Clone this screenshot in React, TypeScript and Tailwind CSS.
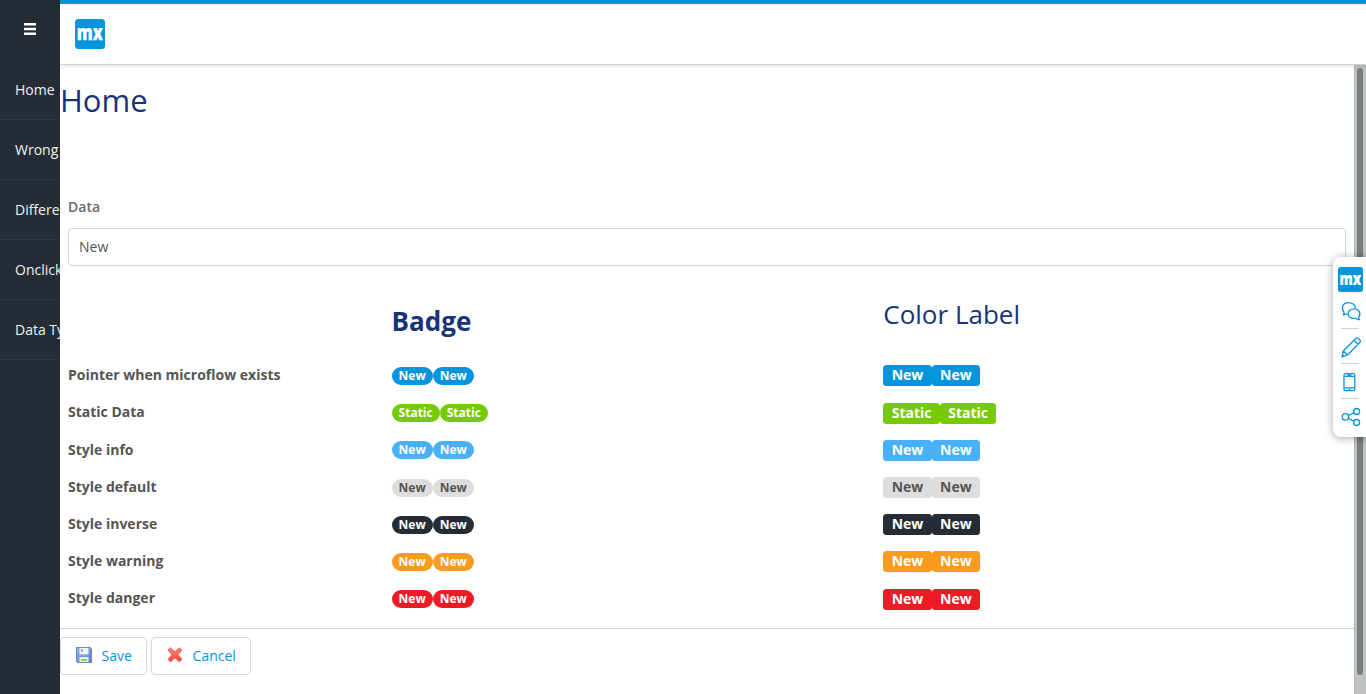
import React from "react";

const menu = ["Home", "Wrong data", "Different views", "Onclick", "Data Types"];

const rows = [
  { title: "Pointer when microflow exists", text: "New", color: "bg-[#0595db] text-white" },
  { title: "Static Data", text: "Static", color: "bg-[#76ca02] text-white" },
  { title: "Style info", text: "New", color: "bg-[#48b0f7] text-white" },
  { title: "Style default", text: "New", color: "bg-[#dddddd] text-[#555555]" },
  { title: "Style inverse", text: "New", color: "bg-[#252c36] text-white" },
  { title: "Style warning", text: "New", color: "bg-[#f99b1d] text-white" },
  { title: "Style danger", text: "New", color: "bg-[#ed1c24] text-white" },
];

function Logo({ className }: { className: string }) {
  return (
    <svg viewBox="0 0 30 30" className={className}>
      <rect width="30" height="30" rx="3.5" fill="#0595db" />
      <text
        x="1.8"
        y="21.2"
        textLength="26"
        lengthAdjust="spacingAndGlyphs"
        fill="#fff"
        stroke="#fff"
        strokeWidth=".25"
        fontFamily="Open Sans, sans-serif"
        fontWeight="800"
        fontSize="21"
      >
        mx
      </text>
    </svg>
  );
}

function SaveIcon() {
  return (
    <svg viewBox="0 0 16 16" className="mb-px size-4">
      <defs>
        <linearGradient id="disk" x1="0" y1="0" x2="1" y2="1">
          <stop offset="0" stopColor="#8fb0e6" />
          <stop offset="1" stopColor="#5b80c6" />
        </linearGradient>
      </defs>
      <path d="M.5.5h14l1 1v14h-14l-1-1z" fill="url(#disk)" stroke="#6a88c0" />
      <path d="M3.5 1h9v6.5h-9z" fill="#eef3fc" />
      <path d="M5 2h1.5v3H5z" fill="#7f9bd0" />
      <path d="M4 8h8" stroke="#9ab5e5" />
      <path d="M3.5 10h9v5h-9z" fill="#e9f2e8" />
      <path d="M5 12h6v2H5z" fill="#8fcb70" />
    </svg>
  );
}

function CancelIcon() {
  return (
    <svg viewBox="0 0 16 16" className="mb-px size-4">
      <defs>
        <linearGradient id="cross" x1="0" y1="0" x2="0" y2="1">
          <stop offset="0" stopColor="#ff8178" />
          <stop offset="1" stopColor="#ef4140" />
        </linearGradient>
      </defs>
      <path
        d="M3.4.8 8 4.9 12.5.8l2.3 2.3L11 7.8l4 4.5-2.6 2.6L8 10.8l-4.5 4.1L1 12.3l4-4.5L1 3.1z"
        fill="url(#cross)"
        stroke="#f9625c"
        strokeWidth="1"
        strokeLinejoin="round"
      />
    </svg>
  );
}

function Tool({ children, last }: { children: React.ReactNode; last?: boolean }) {
  return (
    <div className="h-[35px] w-5">
      <div className={last ? "h-[35px]" : "h-[35px] w-[18px] border-b border-[#cfcfcf]"}>
        <svg
          viewBox="0 0 20 34"
          className="h-[34px] w-5 max-w-none overflow-visible"
          fill="none"
          stroke="#0595db"
          strokeWidth="1.3"
          strokeLinejoin="round"
        >
          {children}
        </svg>
      </div>
    </div>
  );
}

export default function App() {
  return (
    <div className="relative flex h-[694px] w-[1366px] overflow-hidden bg-white font-['Open_Sans',sans-serif] text-sm text-[#555]">
      <aside className="w-[60px] shrink-0 overflow-hidden bg-[#252c36] text-[#f0f1f2]">
        <div className="h-[60px] pt-[23px] pl-6">
          <svg viewBox="0 0 12 12" className="size-3" fill="#fff">
            <path d="M0 0h12v2.4H0zM0 4.8h12v2.4H0zM0 9.6h12V12H0z" />
          </svg>
        </div>
        {menu.map((item) => (
          <div
            key={item}
            className="flex h-[60px] items-center border-b border-[#2f3745] pl-[15px] whitespace-nowrap"
          >
            {item}
          </div>
        ))}
      </aside>

      <div className="flex min-w-0 flex-1 flex-col">
        <header className="z-10 h-[65px] shrink-0 border-t-4 border-b border-t-[#0595db] border-b-[#d0d0d0] bg-white pt-[15px] pl-[15px] shadow-[0_2px_4px_rgba(0,0,0,0.09)]">
          <Logo className="size-[30px]" />
        </header>

        <div className="flex min-h-0 flex-1">
          <main className="min-w-0 flex-1">
            <h1 className="h-[131px] pt-[14px] text-[31px] leading-[42px] text-[#17347b]">Home</h1>
            <div className="px-2">
              <div className="h-8 leading-[22px] font-semibold text-[#6c6c6c]">Data</div>
              <div className="flex h-[38px] items-center rounded border border-[#d2d2d2] px-2.5">New</div>
            </div>
            <div className="grid h-[90.6px] grid-cols-[323.6px_491.7px_1fr] pl-2 text-[26px] leading-9 text-[#17347b]">
              <span />
              <h2 className="pt-[37px] font-bold">Badge</h2>
              <h2 className="pt-[30px]">Color Label</h2>
            </div>
            <div className="h-[271.4px] font-bold">
              {rows.map((row) => (
                <div
                  key={row.title}
                  className="grid h-[37.2px] grid-cols-[323.6px_491.7px_1fr] items-center pl-2"
                >
                  <span>{row.title}</span>
                  <span className="flex pt-[1.8px] text-xs leading-[18px]">
                    {[0, 1].map((n) => (
                      <span key={n} className={`rounded-full px-[7px] ${row.color}`}>
                        {row.text}
                      </span>
                    ))}
                  </span>
                  <span className="flex pt-[1.5px] leading-[19.2px]">
                    {[0, 1].map((n) => (
                      <span key={n} className={`h-[21px] rounded-[3.5px] px-[8.4px] ${row.color}`}>
                        {row.text}
                      </span>
                    ))}
                  </span>
                </div>
              ))}
            </div>
            <div className="flex gap-1 border-t border-[#d2d2d2] pt-2 text-[#0595db]">
              <button className="flex h-[38px] w-[87px] items-center gap-[9.6px] rounded border border-[#d8d8d8] pl-[15px]">
                <SaveIcon />
                Save
              </button>
              <button className="flex h-[38px] w-[100px] items-center gap-[9.6px] rounded border border-[#d8d8d8] pl-[15px]">
                <CancelIcon />
                Cancel
              </button>
            </div>
          </main>
          <div className="w-3 shrink-0 border-l border-[#b4b6b6] bg-[#c1c3c3] pt-[3px] pl-0.5">
            <div className="h-[607px] w-1.5 rounded-full bg-[#787d7f]" />
          </div>
        </div>
      </div>

      <div className="absolute top-[257px] left-[1333px] z-20 h-[180px] w-[40px] rounded-lg bg-white pt-[10px] pl-[5px] shadow-[0_1px_8px_rgba(0,0,0,0.35)]">
        <Logo className="size-[25px]" />
        <div className="mt-[2px] flex flex-col pl-[3px]">
          <Tool>
            <path d="M6.8 19.9c-1.3.4-2.7.3-4.6 1.1.9-1.3 1.1-2 .8-2.9-3.3-3.7-1.5-9.4 4.6-9.4 4 0 6.8 2.5 6.8 5.4" />
            <path d="M13 14.8c-3.5 0-5.9 2.2-5.9 5 0 3.3 3.3 5.2 7.3 4.5 1.1.8 2.4 1.4 4.1 1.4-1-1-1-1.9-.7-2.9 2.5-3.4.3-8-4.8-8z" />
          </Tool>
          <Tool>
            <path d="m1 28 1.3-6L15 9.3q1-.9 2 0l2 2q.9 1 0 2L6.5 26z M2.3 22l4.2 4M13 11.3l4.2 4.2M1.2 25.6l2 2" />
          </Tool>
          <Tool>
            <rect x="3" y="9.7" width="10.8" height="17" rx="1.5" />
            <path d="M3.2 12.3h10.4M3.2 23.9h10.4M6.4 11h4M7.7 25.3h1.4" />
          </Tool>
          <Tool last>
            <circle cx="4.4" cy="17.9" r="3.2" />
            <circle cx="15.6" cy="12.5" r="3" />
            <circle cx="15.6" cy="23.5" r="3" />
            <path d="m7.3 16.5 5.6-2.7M7.2 19.4l5.7 2.8" />
          </Tool>
        </div>
      </div>
    </div>
  );
}
